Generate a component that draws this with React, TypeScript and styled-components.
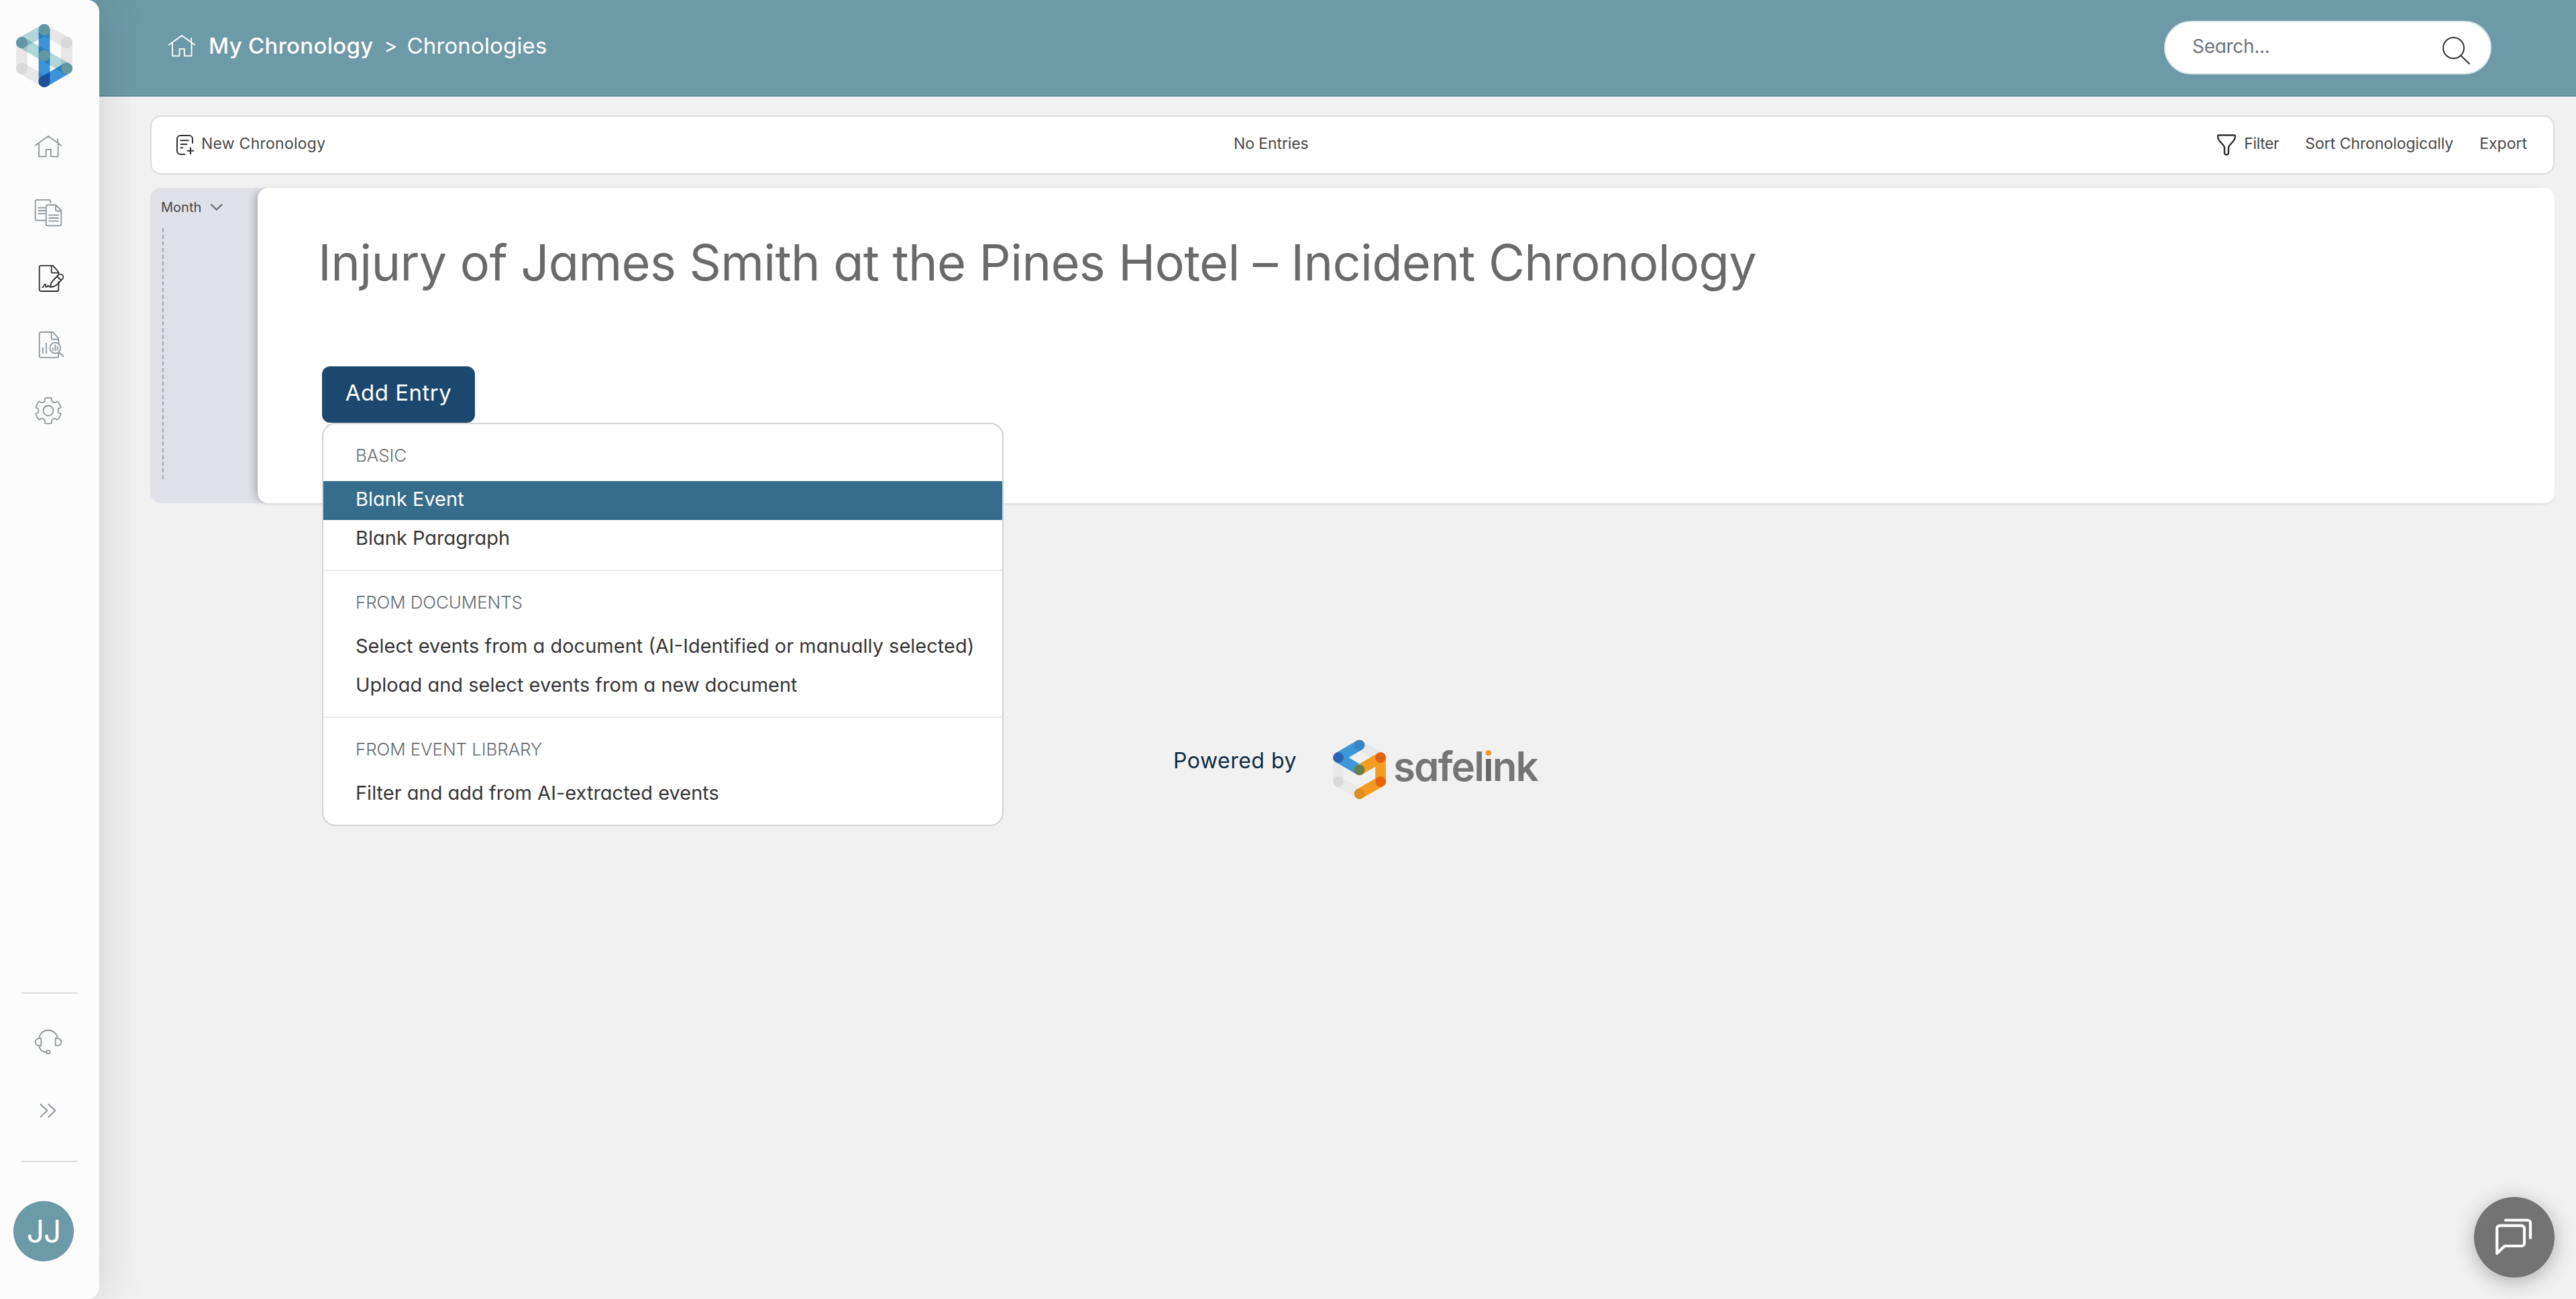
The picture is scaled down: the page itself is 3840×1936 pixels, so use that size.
import styled, { createGlobalStyle } from 'styled-components'

const menuSections = [
  { label: 'BASIC', items: ['Blank Event', 'Blank Paragraph'] },
  {
    label: 'FROM DOCUMENTS',
    items: [
      'Select events from a document (AI-Identified or manually selected)',
      'Upload and select events from a new document',
    ],
  },
  {
    label: 'FROM EVENT LIBRARY',
    items: ['Filter and add from AI-extracted events'],
  },
]

// six-toothed outline around (20, 20)
const gearPath = () => {
  const at = (r: number, deg: number) => {
    const a = (deg * Math.PI) / 180
    return `${(20 + r * Math.cos(a)).toFixed(2)} ${(20 + r * Math.sin(a)).toFixed(2)}`
  }
  let d = ''
  for (let k = 0; k < 6; k++) {
    const c = k * 60 - 90
    d += `${k ? 'L' : 'M'}${at(15, c - 21)} Q${at(15.6, c - 17)} ${at(17.5, c - 17)}`
    d += ` Q${at(19.4, c - 17)} ${at(19.4, c - 12)} Q${at(19.8, c)} ${at(19.4, c + 12)}`
    d += ` Q${at(19.4, c + 17)} ${at(17.5, c + 17)} Q${at(15.6, c + 17)} ${at(15, c + 21)}`
    d += ` Q${at(14.2, c + 30)} ${at(15, c + 39)} `
  }
  return d + 'Z'
}

const HomeIcon = () => (
  <Icon viewBox="0 0 40 40">
    <path d="M.8 18.8 20 5l19.2 13.8M34 15V9M6 15.5v19.8h10.5V24.8h7.3v10.5h10.8V15.5" />
  </Icon>
)

const DocumentsIcon = () => (
  <Icon viewBox="0 0 40 40">
    <path d="M16.7 31.5H3a2.3 2.3 0 0 1-2.3-2.3V3A2.3 2.3 0 0 1 3 .8h18A2.3 2.3 0 0 1 23.3 3v2.3" />
    <path d="M31 8.5H19a2.3 2.3 0 0 0-2.3 2.3V37a2.3 2.3 0 0 0 2.3 2.3h18a2.3 2.3 0 0 0 2.3-2.3V16.5zV15.5a2 2 0 0 0 2 2h6" />
    <path d="M5.3 12.7h9.5M5.3 17h9.5M5.3 21.3h9.5M21 23.7h14M21 28h14M21 32.3h14" />
  </Icon>
)

const SignIcon = () => (
  <Icon viewBox="0 0 40 40">
    <path d="M35.3 13.5v-3L27 .8H9A2.3 2.3 0 0 0 6.7 3v33.5A2.3 2.3 0 0 0 9 39h24a2.3 2.3 0 0 0 2.3-2.3V25M24.7 1v8.7a2 2 0 0 0 2 2H35" />
    <path d="M23.3 32.7c0-4 1.2-6.5 3-8.7l8.7-9a4 4 0 0 1 6.3 5.3l-8.5 9c-2.5 2.2-5 3.4-9.5 3.4zM33 17l5.8 5.3" />
    <path d="M11 33.3c2.6 0 2.4-5 4.2-5 1.6 0 .2 4.7 1.7 4.7s1.800-2.700 3-2.400c1.200.3.200 2.200 3.400 2.100" />
  </Icon>
)

const ReportIcon = () => (
  <Icon viewBox="0 0 40 40">
    <path d="M35.3 17.5v-7L27 1H9a2.3 2.3 0 0 0-2.300 2.300v33A2.300 2.300 0 0 0 9 38.800h24a2.300 2.300 0 0 0 2.300-2.300V33M24.700 1.200v8.500a2 2 0 0 0 2 2h8.300" />
    <path d="M12 24.500v7.800M17 17.700v14.600M26.700 24.500v3.500M30.300 20.500v7.700M33.700 22.500v5.200M36 31l6.500 6" />
    <circle cx="30.3" cy="24.7" r="8" />
  </Icon>
)

const GearIcon = () => (
  <Icon viewBox="0 0 40 40">
    <path d={gearPath()} />
    <circle cx="20" cy="20" r="7.5" />
  </Icon>
)

const HeadsetIcon = () => (
  <Icon viewBox="0 0 40 40">
    <path d="M6.300 14.500C7 7 13 2.500 20 2.500S33 7 33.700 14.500M9.300 14.700v10.600H6a5.300 5.300 0 0 1 0-10.600zM30.700 14.700v10.600H34a5.300 5.300 0 0 0 0-10.600zM6.300 25.500c1 6 5.200 9.500 10.800 9.500" />
    <circle cx="20" cy="35" r="2.7" />
  </Icon>
)

const ExpandIcon = () => (
  <Icon viewBox="0 0 40 40">
    <path strokeWidth={2} d="m8.600 11 9.700 9.300-9.700 9.300M20.500 11l9.700 9.300-9.700 9.300" />
  </Icon>
)

const ChronologyMark = () => (
  <Mark $blend width={84} height={94} viewBox="24 36 84 94">
    <g stroke="#eaeaea" strokeWidth={16.8}>
      <path d="M66 44.500 99.500 63.500" />
      <path d="M99.500 63.500V102" />
      <path d="M32.500 63.500V102" />
      <path d="M32.500 102 66 121.500" />
    </g>
    <g stroke="#3b95db" strokeWidth={16.8}>
      <path d="M66 121.500 99.500 102" />
      <path d="M66 44.500V121.500" />
    </g>
    <g stroke="#b4dadd" strokeWidth={16.8}>
      <path d="M66 44.500 32.500 63.500" />
      <path d="M32.500 63.500 99.500 102" />
    </g>
    <g fill="#6198a4">
      <circle cx="66" cy="44.5" r="8.4" />
      <circle cx="32.5" cy="63.5" r="8.4" />
      <circle cx="66" cy="83" r="8.4" />
      <circle cx="99.5" cy="102" r="8.4" />
      <circle cx="66" cy="121.5" r="8.4" fill="#214f9b" />
      <circle cx="32.5" cy="102" r="8.4" fill="#d9d9d9" />
      <circle cx="99.5" cy="63.5" r="8.4" fill="#d9d9d9" />
    </g>
  </Mark>
)

const SafelinkMark = () => (
  <Mark width={80} height={90} viewBox="1987 1102 80 90">
    <path
      d="M2026.500 1110.500 2058 1129M1995 1129V1165L2026.500 1183"
      stroke="#e9e9e9"
      strokeWidth={15.6}
      strokeLinejoin="round"
    />
    <path
      d="M2026.500 1110.500 1995 1129 2026.500 1147.500"
      stroke="#3e97d8"
      strokeWidth={15.6}
      strokeLinejoin="round"
    />
    <path
      d="M2026.500 1147.500 2058 1129V1165L2026.500 1183"
      stroke="#f39b22"
      strokeWidth={15.6}
      strokeLinejoin="round"
    />
    <circle cx="2026.5" cy="1110.5" r="7.8" fill="#3886c4" />
    <circle cx="1995" cy="1129" r="7.8" fill="#2766b4" />
    <circle cx="2026.5" cy="1147.5" r="7.8" fill="#647f48" />
    <circle cx="2058" cy="1129" r="7.8" fill="#dd6211" />
    <circle cx="2058" cy="1165" r="7.8" fill="#e66310" />
    <circle cx="2026.5" cy="1183" r="7.8" fill="#e08e22" />
    <circle cx="1995" cy="1165" r="7.8" fill="#d9d9d9" />
  </Mark>
)

function App() {
  return (
    <Page>
      <GlobalStyle />
      <Sidebar>
        <ChronologyMark />
        <Nav>
          <NavItem><HomeIcon /></NavItem>
          <NavItem><DocumentsIcon /></NavItem>
          <NavItem $active><SignIcon /></NavItem>
          <NavItem><ReportIcon /></NavItem>
          <NavItem><GearIcon /></NavItem>
        </Nav>
        <SidebarFooter>
          <Divider />
          <NavItem><HeadsetIcon /></NavItem>
          <NavItem><ExpandIcon /></NavItem>
          <Divider />
        </SidebarFooter>
        <Avatar>JJ</Avatar>
      </Sidebar>

      <Content>
        <Header>
          <Breadcrumb>
            <HomeIcon />
            <Crumb $current>My Chronology</Crumb>
            <Separator>&gt;</Separator>
            <Crumb>Chronologies</Crumb>
          </Breadcrumb>
          <SearchBox>
            <SearchText>Search...</SearchText>
            <SearchIcon width={41} height={41} viewBox="0 0 41 41">
              <circle cx="16.5" cy="16.5" r="15.5" />
              <path d="m27.500 28 12.500 12" />
            </SearchIcon>
          </SearchBox>
        </Header>

        <Main>
          <Toolbar>
            <ToolbarItem>
              <ToolIcon width={26} height={30} viewBox="0 0 26 30">
                <path d="M24 12V6a5 5 0 0 0-5-5H6a5 5 0 0 0-5 5v18a5 5 0 0 0 5 5h6.500M6.500 8.300h11.300M6.500 14h9M6.500 19.200h2.800M21 19.200v9M16.500 23.700h9" />
              </ToolIcon>
              <ToolbarText $spacing={0.25}>New Chronology</ToolbarText>
            </ToolbarItem>
            <ToolbarText $spacing={-0.1}>No Entries</ToolbarText>
            <ToolbarActions>
              <ToolbarItem>
                <ToolIcon width={30} height={32} viewBox="0 0 30 32">
                  <path strokeWidth={2.4} d="M3 1.500h23.500a1.500 1.500 0 0 1 1.500 1.500c0 3.500-.5 4.500-2.500 7l-5.500 6c-1.500 1.700-2 2.600-2 4.500v7.500c0 3.300-6 3.300-6 0v-7.500c0-1.900-.5-2.800-2-4.500l-5.500-6c-2-2.500-2.500-3.500-2.500-7A1.500 1.500 0 0 1 3 1.500z" />
                </ToolIcon>
                <ToolbarText $spacing={-0.4}>Filter</ToolbarText>
              </ToolbarItem>
              <ToolbarText $spacing={-0.05}>Sort Chronologically</ToolbarText>
              <ToolbarText>Export</ToolbarText>
            </ToolbarActions>
          </Toolbar>

          <Chronology>
            <Timeline>
              <Month>
                Month
                <ToolIcon width={20} height={12} viewBox="0 0 20 12">
                  <path d="m2 2 7.800 7.500L17.600 2" stroke="#6a6a70" strokeWidth={2.4} />
                </ToolIcon>
              </Month>
              <TimelineTrack />
            </Timeline>
            <Sheet>
              <Title>
                Injury of James Smith at the Pines Hotel – Incident Chronology
              </Title>
              <AddEntry>
                <AddButton>Add Entry</AddButton>
                <Menu>
                  {menuSections.map((section) => (
                    <MenuSection key={section.label}>
                      <MenuLabel>{section.label}</MenuLabel>
                      {section.items.map((item) => (
                        <MenuItem key={item} $selected={item === 'Blank Event'}>
                          {item}
                        </MenuItem>
                      ))}
                    </MenuSection>
                  ))}
                </Menu>
              </AddEntry>
            </Sheet>
          </Chronology>

          <PoweredBy>
            <PoweredText>Powered by</PoweredText>
            <SafelinkMark />
            <Wordmark>
              safel<DottedI>i</DottedI>nk
            </Wordmark>
          </PoweredBy>
        </Main>
      </Content>

      <ChatButton>
        <svg width={60} height={60} viewBox="0 0 60 60" fill="none">
          <path d="M8 12.700h33a4 4 0 0 1 4 4V39a4 4 0 0 1-4 4H15.700L4.200 54V16.500a4 4 0 0 1 4-3.800zM17 4.500h33a4 4 0 0 1 4 4V31" />
        </svg>
      </ChatButton>
    </Page>
  )
}

const GlobalStyle = createGlobalStyle`
  * {
    box-sizing: border-box;
  }
  body {
    margin: 0;
    background: #f1f1f1;
    font-family: Inter, 'Liberation Sans', sans-serif;
    font-feature-settings: 'cv11';
    white-space: nowrap;
  }
`

const Page = styled.div`
  display: flex;
  height: 100vh;
  overflow: hidden;
`

const Icon = styled.svg`
  display: block;
  width: 40px;
  height: 40px;
  flex: none;
  overflow: visible;
  fill: none;
  stroke: currentColor;
  stroke-width: 1.8;
  stroke-linecap: round;
  stroke-linejoin: round;
`

const Mark = styled.svg<{ $blend?: boolean }>`
  display: block;
  flex: none;
  fill: none;
  stroke-linecap: round;

  path {
    mix-blend-mode: ${(p) => (p.$blend ? 'multiply' : 'normal')};
  }
`

const Sidebar = styled.aside`
  position: relative;
  z-index: 2;
  display: flex;
  flex-direction: column;
  flex: none;
  width: 148px;
  padding: 36px 0 56px 24px;
  border-radius: 0 18px 18px 0;
  background: #fcfcfc;
  box-shadow: 0 0 70px rgba(0, 0, 0, 0.15);
`

const Nav = styled.nav`
  display: flex;
  flex-direction: column;
  gap: 58.5px;
  margin: 68px 0 auto 28px;
`

const NavItem = styled.div<{ $active?: boolean }>`
  color: ${(p) => (p.$active ? '#2e2e2e' : '#8d959b')};
`

const SidebarFooter = styled.div`
  display: grid;
  grid-template-rows: 2px 40px 40px 2px;
  row-gap: 52px;
  margin-bottom: 71px;

  ${NavItem} {
    margin-left: 28px;
  }
  ${NavItem} + ${NavItem} {
    margin-top: 10px;
  }
`

const Divider = styled.div`
  width: 84px;
  height: 2px;
  margin-left: 8px;
  background: #dcdcdc;

  &:last-child {
    margin-top: 13px;
  }
`

const Avatar = styled.div`
  display: flex;
  align-items: center;
  justify-content: center;
  width: 90px;
  height: 90px;
  margin-left: -4px;
  border-radius: 50%;
  background: #6d9aa7;
  color: #fff;
  font-size: 46px;
  letter-spacing: -1px;
`

const Content = styled.div`
  flex: 1;
  min-width: 0;
  margin-left: -20px;
`

const Header = styled.header`
  display: flex;
  align-items: center;
  justify-content: space-between;
  height: 144px;
  padding: 0 126px 6px 123px;
  border-bottom: 2px solid #608d9a;
  background: #6d9aa7;
`

const Breadcrumb = styled.div`
  display: flex;
  align-items: center;
  color: #fff;
  font-size: 33px;
`

const Crumb = styled.span<{ $current?: boolean }>`
  margin-left: ${(p) => (p.$current ? 20 : 14)}px;
  font-weight: ${(p) => (p.$current ? 500 : 400)};
  letter-spacing: ${(p) => (p.$current ? 0.3 : 0.15)}px;
`

const Separator = styled.span`
  margin-left: 16px;
  font-size: 30px;
`

const SearchBox = styled.div`
  display: flex;
  align-items: center;
  justify-content: space-between;
  width: 488px;
  height: 80px;
  margin-top: 6px;
  padding: 0 30px 0 40px;
  border: 2px solid #d9e6ea;
  border-radius: 40px;
  background: #fff;
`

const SearchText = styled.span`
  padding-bottom: 4px;
  color: #6f757b;
  font-size: 28px;
  letter-spacing: -0.3px;
`

const SearchIcon = styled.svg`
  margin-top: 8px;
  fill: none;
  stroke: #333;
  stroke-width: 2;
  stroke-linecap: round;
`

const Main = styled.main`
  padding: 28px 32px 0 96px;
`

const Toolbar = styled.div`
  display: flex;
  align-items: center;
  justify-content: space-between;
  height: 88px;
  padding: 0 39px 0 37px;
  border: 2px solid #dcdcdc;
  border-radius: 16px;
  background: #fff;
`

const ToolbarItem = styled.div`
  display: flex;
  align-items: center;
  gap: 11px;
`

const ToolbarActions = styled.div`
  display: flex;
  align-items: center;
  gap: 39px;
`

const ToolbarText = styled.span<{ $spacing?: number }>`
  padding-bottom: 5px;
  color: #484848;
  font-size: 23px;
  letter-spacing: ${(p) => p.$spacing ?? 0}px;
`

const ToolIcon = styled.svg`
  flex: none;
  fill: none;
  stroke: #2e2e2e;
  stroke-width: 2;
  stroke-linecap: round;
  stroke-linejoin: round;
`

const Chronology = styled.section`
  display: flex;
  height: 470px;
  margin-top: 20px;
  border-radius: 16px;
  background: linear-gradient(to right, #e0e1e8 200px, transparent 200px);
`

const Timeline = styled.div`
  flex: none;
  width: 160px;
  padding-left: 16px;
`

const Month = styled.div`
  display: flex;
  align-items: center;
  gap: 13px;
  height: 60px;
  padding-bottom: 2px;
  color: #45454c;
  font-size: 20px;
`

const TimelineTrack = styled.div`
  height: 374px;
  margin-left: 2px;
  border-left: 2px dashed #a3a3a9;
`

const Sheet = styled.div`
  flex: 1;
  padding: 66px 0 0 96px;
  border-radius: 16px;
  background: #fff;
  box-shadow:
    -10px 0 12px -6px rgba(0, 0, 0, 0.24),
    0 2px 3px rgba(0, 0, 0, 0.06);
`

const Title = styled.h1`
  margin: 0 0 110px -6px;
  color: #6a6a6a;
  font-size: 74px;
  font-weight: 400;
  line-height: 90px;
  letter-spacing: -0.7px;
`

const AddEntry = styled.div`
  position: relative;
  width: 228px;
`

const AddButton = styled.button`
  display: block;
  width: 228px;
  height: 84px;
  padding: 0 0 6px;
  border: 0;
  border-radius: 12px;
  background: #1c486f;
  color: #fff;
  font-family: inherit;
  font-feature-settings: inherit;
  font-size: 33px;
  letter-spacing: 0.5px;
`

const Menu = styled.div`
  position: absolute;
  top: 84px;
  left: 0;
  width: 1016px;
  border: 2px solid #d0d4d7;
  border-radius: 20px;
  background: #fff;
`

const MenuSection = styled.div`
  padding-bottom: 16px;

  & + & {
    border-top: 2px solid #e7e9eb;
  }
`

const MenuLabel = styled.div`
  padding: 30px 48px 22px;
  color: #666c72;
  font-size: 26px;
  font-weight: 300;
  line-height: 33px;
  letter-spacing: -0.1px;
`

const MenuItem = styled.div<{ $selected?: boolean }>`
  height: 58px;
  padding: 0 48px;
  background: ${(p) => (p.$selected ? '#366d8c' : 'transparent')};
  color: ${(p) => (p.$selected ? '#fff' : '#363636')};
  font-size: 29px;
  line-height: 53px;
`

const PoweredBy = styled.div`
  display: flex;
  align-items: center;
  margin-top: 352px;
  padding-left: 1525px;
`

const PoweredText = styled.span`
  width: 238px;
  padding-bottom: 27px;
  color: #0f2c44;
  font-size: 32px;
  letter-spacing: 0.5px;
`

const Wordmark = styled.span`
  margin-left: 10px;
  padding-bottom: 10px;
  color: #757575;
  font-size: 60px;
  font-weight: 600;
  letter-spacing: -1.9px;
`

const DottedI = styled.span`
  background: linear-gradient(#f09a2a 31%, #666 31%);
  background-clip: text;
  -webkit-background-clip: text;
  color: transparent;
`

const ChatButton = styled.button`
  position: fixed;
  right: 32px;
  bottom: 32px;
  z-index: 3;
  display: flex;
  align-items: center;
  justify-content: center;
  width: 120px;
  height: 120px;
  padding: 0;
  border: 0;
  border-radius: 50%;
  background: #737373;
  box-shadow: 0 6px 30px rgba(0, 0, 0, 0.28);

  path {
    stroke: #fff;
    stroke-width: 4.2;
    stroke-linecap: round;
    stroke-linejoin: round;
  }
`

export default App
